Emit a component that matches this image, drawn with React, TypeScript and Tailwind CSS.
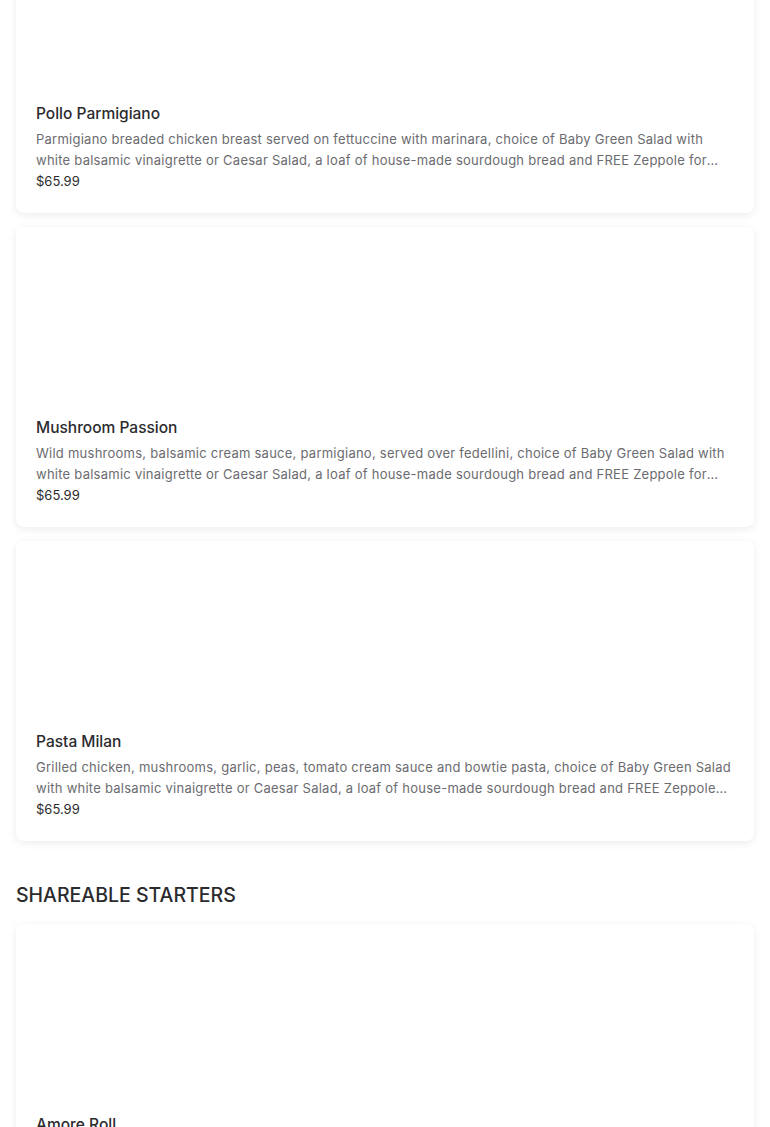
const items = [
  {
    name: "Pollo Parmigiano",
    desc: "Parmigiano breaded chicken breast served on fettuccine with marinara, choice of Baby Green Salad with white balsamic vinaigrette or Caesar Salad, a loaf of house-made sourdough bread and FREE Zeppole for dessert.",
    price: "$65.99",
  },
  {
    name: "Mushroom Passion",
    desc: "Wild mushrooms, balsamic cream sauce, parmigiano, served over fedellini, choice of Baby Green Salad with white balsamic vinaigrette or Caesar Salad, a loaf of house-made sourdough bread and FREE Zeppole for dessert.",
    price: "$65.99",
  },
  {
    name: "Pasta Milan",
    desc: "Grilled chicken, mushrooms, garlic, peas, tomato cream sauce and bowtie pasta, choice of Baby Green Salad with white balsamic vinaigrette or Caesar Salad, a loaf of house-made sourdough bread and FREE Zeppole for dessert.",
    price: "$65.99",
  },
];

function MenuCard({ name, desc, price }: { name: string; desc: string; price: string }) {
  return (
    <div className="bg-white rounded-lg shadow-[0_2px_8px_rgba(0,0,0,0.08)] overflow-hidden">
      <div className="h-[180px] bg-white" />
      <div className="px-5 pt-[11px] pb-[22px]">
        <h3 className="text-[15.5px] leading-[20px] font-medium text-[#2b2b2e]">{name}</h3>
        <p className="mt-[5px] text-[13px] leading-[21px] text-[#6b6b70] tracking-[0.25px] line-clamp-2">{desc}</p>
        <p className="text-[13px] leading-[20px] text-[#2b2b2e]">{price}</p>
      </div>
    </div>
  );
}

export default function App() {
  return (
    <div className="min-h-screen bg-white font-['Inter',sans-serif] px-4 overflow-hidden">
      <div className="-mt-[87px] flex flex-col gap-[14px]">
        {items.map((it) => (
          <MenuCard key={it.name} {...it} />
        ))}
      </div>
      <h2 className="mt-[42px] mb-[17px] text-[19.5px] leading-[24px] font-medium text-[#2b2b2e]">
        SHAREABLE STARTERS
      </h2>
      <MenuCard
        name="Amore Roll"
        desc="House-made bread rolled with mozzarella, garlic butter and herbs, baked golden and served with marinara."
        price="$12.99"
      />
    </div>
  );
}
